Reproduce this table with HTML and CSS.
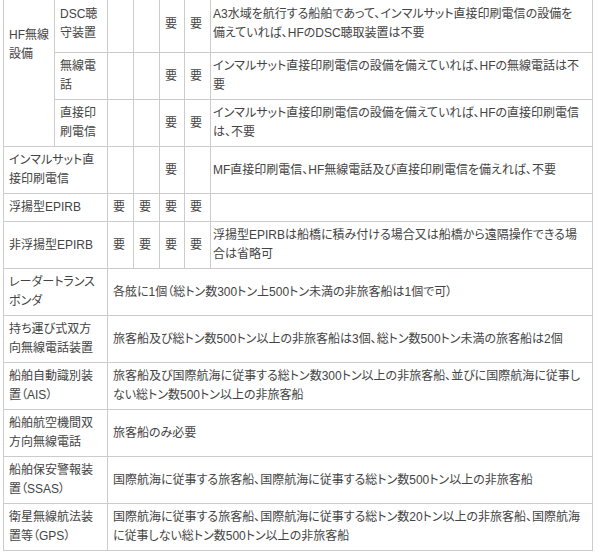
FILE: index.html
```html
<!DOCTYPE html>
<html lang="ja">
<head>
<meta charset="utf-8">
<title>無線設備</title>
<link rel="stylesheet" href="styles.css">
</head>
<body>
<table class="spec">
<colgroup>
<col class="c-name"><col class="c-sub"><col class="c-mark"><col class="c-mark"><col class="c-mark-n"><col class="c-mark"><col class="c-note">
</colgroup>
<tbody>
<tr class="row-first">
<td rowspan="3" class="group">HF無線<br>設備</td>
<td>DSC聴<br>守装置</td>
<td></td><td></td><td>要</td><td>要</td>
<td class="note-tight">A3水域を航行する船舶であって、インマルサット直接印刷電信の設備を<br>備えていれば、HFのDSC聴取装置は不要</td>
</tr>
<tr>
<td>無線電<br>話</td>
<td></td><td></td><td>要</td><td>要</td>
<td class="note-tight">インマルサット直接印刷電信の設備を備えていれば、HFの無線電話は不<br>要</td>
</tr>
<tr>
<td>直接印<br>刷電信</td>
<td></td><td></td><td>要</td><td>要</td>
<td class="note-tight">インマルサット直接印刷電信の設備を備えていれば、HFの直接印刷電信<br>は、不要</td>
</tr>
<tr>
<td colspan="2">インマルサット直<br>接印刷電信</td>
<td></td><td></td><td>要</td><td></td>
<td class="note-tight">MF直接印刷電信、HF無線電話及び直接印刷電信を備えれば、不要</td>
</tr>
<tr>
<td colspan="2">浮揚型EPIRB</td>
<td>要</td><td>要</td><td>要</td><td>要</td>
<td class="note-tight"></td>
</tr>
<tr>
<td colspan="2">非浮揚型EPIRB</td>
<td>要</td><td>要</td><td>要</td><td>要</td>
<td class="note-tight">浮揚型EPIRBは船橋に積み付ける場合又は船橋から遠隔操作できる場<br>合は省略可</td>
</tr>
<tr>
<td colspan="2">レーダートランス<br>ポンダ</td>
<td colspan="5">各舷に1個（総トン数300トン上500トン未満の非旅客船は1個で可）</td>
</tr>
<tr>
<td colspan="2">持ち運び式双方<br>向無線電話装置</td>
<td colspan="5">旅客船及び総トン数500トン以上の非旅客船は3個、総トン数500トン未満の旅客船は2個</td>
</tr>
<tr>
<td colspan="2">船舶自動識別装<br>置（AIS）</td>
<td colspan="5">旅客船及び国際航海に従事する総トン数300トン以上の非旅客船、並びに国際航海に従事し<br>ない総トン数500トン以上の非旅客船</td>
</tr>
<tr>
<td colspan="2">船舶航空機間双<br>方向無線電話</td>
<td colspan="5">旅客船のみ必要</td>
</tr>
<tr>
<td colspan="2">船舶保安警報装<br>置（SSAS）</td>
<td colspan="5">国際航海に従事する旅客船、国際航海に従事する総トン数500トン以上の非旅客船</td>
</tr>
<tr>
<td colspan="2">衛星無線航法装<br>置等（GPS）</td>
<td colspan="5">国際航海に従事する旅客船、国際航海に従事する総トン数20トン以上の非旅客船、国際航海<br>に従事しない総トン数500トン以上の非旅客船</td>
</tr>
</tbody>
</table>
</body>
</html>
```

FILE: styles.css
```css
html, body {
  margin: 0;
  padding: 0;
  background: #fff;
}

body {
  font-family: "Liberation Sans", "Noto Sans CJK JP", sans-serif;
  font-size: 12px;
  color: #444;
  font-feature-settings: "palt";
}

.spec {
  border-collapse: collapse;
  table-layout: fixed;
  width: 590px;
  margin: -1px 0 0 3px;
}

.c-name { width: 51px; }
.c-sub { width: 53px; }
.c-mark { width: 26px; }
.c-mark-n { width: 25px; }

.spec td {
  border: 1px solid #ccc;
  padding: 4px 5px;
  line-height: 19px;
  vertical-align: middle;
  text-align: left;
  white-space: nowrap;
  overflow: hidden;
}

.spec .note-tight {
  padding-left: 2px;
}

.spec .group {
  vertical-align: top;
  padding-top: 26px;
}

.row-first td {
  padding-top: 5px;
  padding-bottom: 9px;
}

.row-first .group {
  padding-top: 26px;
}
```
